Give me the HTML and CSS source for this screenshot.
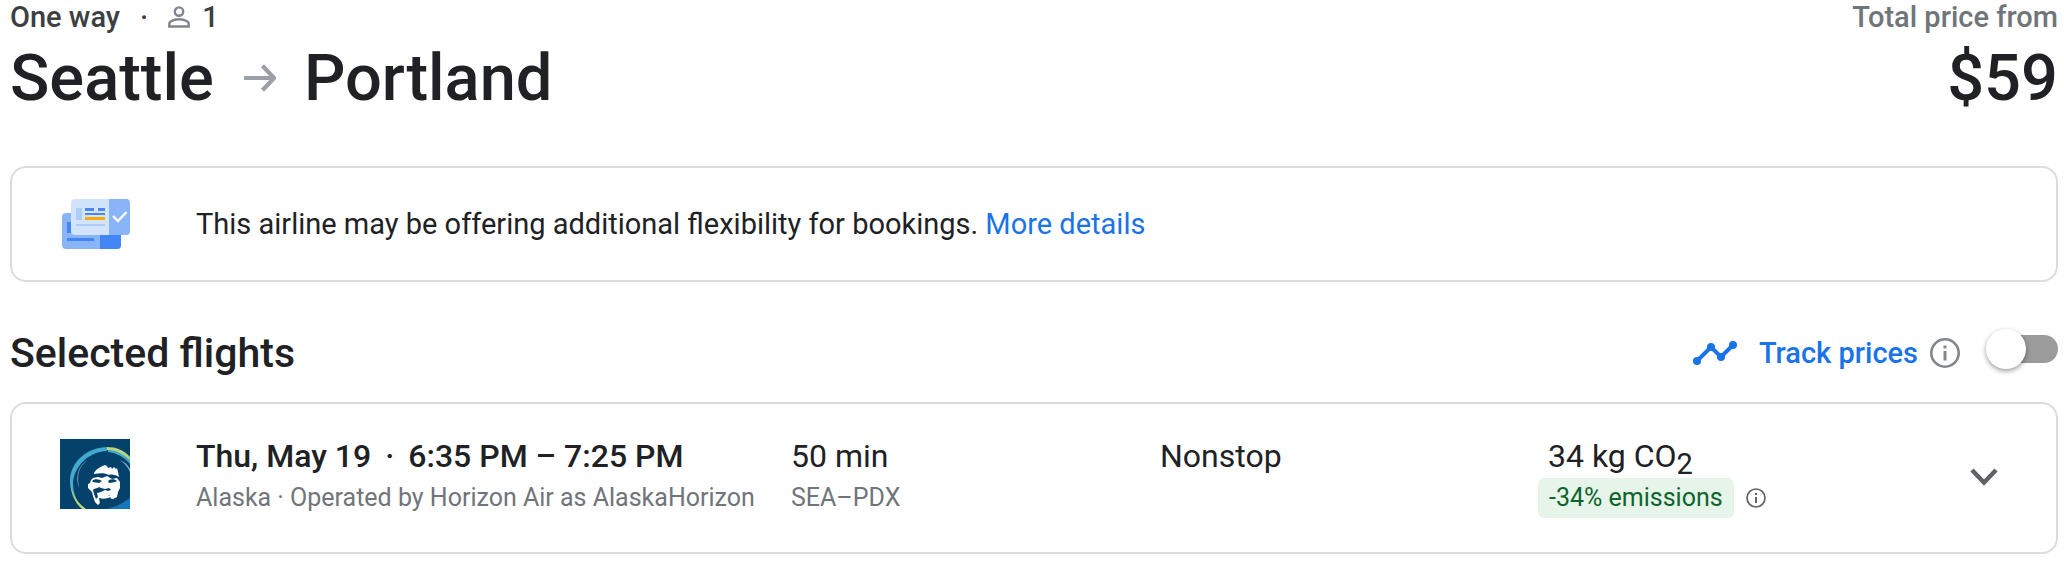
FILE: index.html
```html
<!DOCTYPE html>
<html lang="en">
<head>
<meta charset="utf-8">
<meta name="viewport" content="width=device-width, initial-scale=1">
<title>Seattle to Portland</title>
<link rel="stylesheet" href="styles.css">
</head>
<body>
<main class="page">
  <header class="trip">
    <div class="trip-route">
      <div class="trip-meta">
        <span>One way</span>
        <span class="dot">·</span>
        <svg class="person" viewBox="0 0 22 22" aria-hidden="true"><g fill="none" stroke="#80868b" stroke-width="2.4"><circle cx="11" cy="5.6" r="4.2"/><path d="M1.3 20.5v-2.8c0-3 6.500-4.400 9.700-4.400s9.700 1.400 9.700 4.400v2.800z"/></g></svg>
        <span>1</span>
      </div>
      <h1 class="cities">
        <span>Seattle</span>
        <svg class="arrow" viewBox="0 0 32 28" aria-label="to"><path d="M0 14h29M18.500 1.800L30 14 18.500 26.200" fill="none" stroke="#9aa0a6" stroke-width="4.200"/></svg>
        <span>Portland</span>
      </h1>
    </div>
    <div class="trip-price">
      <div class="price-label">Total price from</div>
      <div class="price">$59</div>
    </div>
  </header>

  <section class="card notice">
    <div class="lead">
      <svg class="tickets" viewBox="0 0 68 50" aria-hidden="true">
        <rect y="14" width="59" height="36" rx="4" fill="#8ab4f8"/>
        <path d="M38 36h21v10a4 4 0 0 1-4 4H38z" fill="#4285f4"/>
        <path d="M5 23h5v11H5zM5 39h27v3H5z" fill="#4285f4"/>
        <rect x="9" width="59" height="36" rx="4" fill="#d2e3fc"/>
        <path d="M47 0h17a4 4 0 0 1 4 4v28a4 4 0 0 1-4 4H47z" fill="#8ab4f8"/>
        <path d="M14 9h6v12h-6zM14 25h29v2H14z" fill="#aecbfa"/>
        <path d="M23 9h9v3h-9zM36 9h7v3h-7zM23 14h20v2H23z" fill="#4f86ec"/>
        <path d="M23 18h20v3H23z" fill="#f9ab00"/>
        <path d="M51 17l5 5 8.500-9" fill="none" stroke="#fff" stroke-width="2.400"/>
      </svg>
    </div>
    <p class="notice-text">This airline may be offering additional flexibility for bookings. <a href="#details">More details</a></p>
  </section>

  <div class="section-head">
    <h2>Selected flights</h2>
    <div class="track">
      <svg class="trend" viewBox="0 0 44 24" aria-hidden="true"><path d="M4 20L18 6l10 10L40 4" fill="none" stroke="#1a73e8" stroke-width="4"/><g fill="#1a73e8"><circle cx="4" cy="20" r="4"/><circle cx="18" cy="6" r="4"/><circle cx="28" cy="16" r="4"/><circle cx="40" cy="4" r="4"/></g></svg>
      <label class="track-label" for="track">Track prices</label>
      <button class="icon-button" type="button" aria-label="About price tracking">
        <svg class="info-large" viewBox="0 0 30 30"><circle cx="15" cy="15" r="13.700" fill="none" stroke="#80868b" stroke-width="2.600"/><path d="M13.500 7.500h3v3h-3zM13.500 13h3v9.500h-3z" fill="#80868b"/></svg>
      </button>
      <input class="switch" id="track" type="checkbox" role="switch">
    </div>
  </div>

  <section class="card flight" id="details">
    <div class="lead">
      <svg class="airline" viewBox="0 0 70 70" role="img" aria-label="Alaska">
        <path fill="#05426b" d="M0 0h70v70H0z"/>
        <path d="M46 70C55 68 62 65 70 59v11z" fill="#1676ba"/>
        <path d="M10 42C10 23 27 8 48 8l-1 4C28 13 15 27 13 43c0 8 2 15 5 20-5-6-8-14-8-21z" fill="#43a9cd"/>
        <path d="M47 8c9 0 17 3 23 10v5c-5-6-12-10-23-12M10 39c0 12 5 23 16 31h-4C14 63 10 53 10 39" fill="#b5d77c"/>
        <path d="M48 11c8 0 15 4 22 10v4c-6-7-13-11-22-12z" fill="#43a9cd"/>
        <path d="M28 21c-10 7-11 15-9 28-4-11-1-23 9-28zM60 21c5 2 8 5 10 9v3c-3-6-6-9-10-12z" fill="#7ca9cc"/>
        <path d="M34 34c2-4 6-6 11-8l2 1 1 2 3-1 1 2 2-2 2 2 1-1 1 4 1 5c-3-2-7-3-10-2-4-2-9-2-15-1z" fill="#fff"/>
        <path d="M31 41l2-2 5-1 4 1 5-2 5 3 5-1 3 4v6l-2 4-1 5-4 2-4-1-2 1-4 1-2 2-3 3-3-3-2-6-1-4-4-4v-4l2-1z" fill="#fff"/>
        <path d="M32 42c2-2 5-2 8-1l2 1-3 2-6-1zM49 41c3-1 6-1 8 1l-2 1-5 1-2-1zM33 51c1-2 4-1 6-3l2 1 4 1 4-1 2 2-3 1-3-1-4 2-4 1 1 4-2 2-2-5zM41 55l5-1h5l-2 3-8 0zM39 59c4 1 7 1 12-1l-1 2-4 3-3-1-3 3z" fill="#05426b"/>
        <path d="M41 54c3 0 5-2 9-1l1 2-3 2h-7z" fill="#fff"/>
      </svg>
    </div>
    <div class="col times">
      <div class="primary strong"><span>Thu, May 19</span><span>·</span><span>6:35 PM – 7:25 PM</span></div>
      <div class="secondary">Alaska · Operated by Horizon Air as AlaskaHorizon</div>
    </div>
    <div class="col duration">
      <div class="primary">50 min</div>
      <div class="secondary">SEA–PDX</div>
    </div>
    <div class="col stops">
      <div class="primary">Nonstop</div>
    </div>
    <div class="col emissions">
      <div class="primary co2">34 kg CO<sub>2</sub></div>
      <div class="badge-row">
        <span class="badge">-34% emissions</span>
        <button class="icon-button" type="button" aria-label="About emissions">
          <svg class="info-small" viewBox="0 0 20 20"><circle cx="10" cy="10" r="9" fill="none" stroke="#5f6368" stroke-width="1.700"/><path d="M9 5h2v2H9zM9 9h2v6H9z" fill="#5f6368"/></svg>
        </button>
      </div>
    </div>
    <button class="icon-button expand" type="button" aria-label="Flight details">
      <svg class="chevron" viewBox="0 0 28 18"><path d="M2 2l12 12.500L26 2" fill="none" stroke="#5f6368" stroke-width="4.400"/></svg>
    </button>
  </section>
</main>
</body>
</html>
```
FILE: styles.css
```css
* {
  box-sizing: border-box;
}

body {
  margin: 0;
  background: #fff;
  color: #202124;
  font-family: Roboto, "Liberation Sans", sans-serif;
  font-size: 29px;
  line-height: 34px;
}

h1, h2, p {
  margin: 0;
  font-weight: 500;
}

svg {
  display: block;
  flex: none;
}

.page {
  padding: 0 6px 18px 10px;
}

.trip {
  display: flex;
  justify-content: space-between;
  margin-bottom: 44px;
}

.trip-meta {
  display: flex;
  align-items: center;
  color: #3c4043;
  font-weight: 500;
}

.dot {
  margin: 0 20px;
}

.person {
  width: 22px;
  height: 22px;
  margin-right: 12px;
}

.cities {
  display: flex;
  align-items: center;
  font-size: 65px;
  line-height: 88px;
}

.arrow {
  width: 32px;
  height: 28px;
  margin: 0 28px 0 30px;
}

.trip-price {
  text-align: right;
}

.price-label {
  color: #70757a;
  font-weight: 500;
}

.price {
  font-size: 65px;
  font-weight: 500;
  line-height: 88px;
}

.card {
  display: flex;
  border: 2px solid #dadce0;
  border-radius: 16px;
}

.lead {
  flex: none;
  width: 136px;
}

.notice {
  align-items: center;
  padding: 31px 48px;
}

.tickets {
  width: 68px;
  height: 50px;
  margin-left: 2px;
}

.notice-text {
  font-weight: 400;
}

.notice-text a {
  color: #1a73e8;
  text-decoration: none;
}

.section-head {
  display: flex;
  align-items: center;
  justify-content: space-between;
  margin: 47px 0 25px;
}

h2 {
  font-size: 41px;
  line-height: 48px;
}

.track {
  display: flex;
  align-items: center;
}

.trend {
  width: 44px;
  height: 24px;
  margin-right: 22px;
}

.track-label {
  margin-right: 12px;
  color: #1a73e8;
  font-weight: 500;
}

.icon-button {
  flex: none;
  padding: 0;
  border: 0;
  background: none;
  cursor: pointer;
}

.info-large {
  width: 30px;
  height: 30px;
}

.switch {
  display: flex;
  align-items: center;
  width: 68px;
  height: 28px;
  margin: 0 0 8px 30px;
  border-radius: 14px;
  background: #9b9b9b;
  appearance: none;
  cursor: pointer;
}

.switch::before {
  content: "";
  width: 40px;
  height: 40px;
  margin-left: -4px;
  border-radius: 50%;
  background: #fff;
  box-shadow: 0 2px 5px rgba(0, 0, 0, 0.4);
}

.switch:checked {
  justify-content: flex-end;
  background: #8ab4f8;
}

.flight {
  padding: 32px 48px 34px;
}

.airline {
  width: 70px;
  height: 70px;
  margin-top: 3px;
}

.col {
  display: flex;
  flex-direction: column;
  gap: 2px;
  min-width: 0;
}

.times {
  flex: 595 1 0;
}

.duration {
  flex: 369 1 0;
}

.stops {
  flex: 378 1 0;
}

.emissions {
  flex: 422 1 0;
}

.primary {
  font-size: 32px;
  line-height: 40px;
}

.strong {
  display: flex;
  gap: 14px;
  font-weight: 500;
}

.secondary {
  color: #70757a;
  font-size: 25px;
  line-height: 40px;
}

.co2 {
  padding-left: 10px;
}

.co2 sub {
  font-size: 29px;
  line-height: 0;
}

.badge-row {
  display: flex;
  align-items: center;
  gap: 12px;
}

.badge {
  padding: 0 11px;
  border-radius: 6px;
  background: #e6f4ea;
  color: #0d652d;
  font-size: 25px;
  line-height: 40px;
}

.info-small {
  width: 20px;
  height: 20px;
}

.expand {
  align-self: center;
  width: 48px;
  height: 48px;
}

.chevron {
  width: 28px;
  height: 18px;
  margin: 0 auto;
}
```
